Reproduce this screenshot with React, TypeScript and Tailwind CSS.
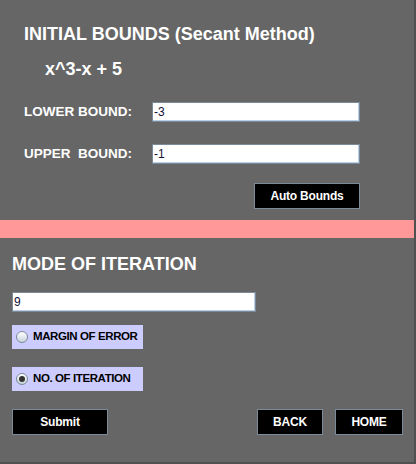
const font = { fontFamily: '"Liberation Sans", Arial, sans-serif' };

function Field({ value, width }: { value: string; width: string }) {
  return (
    <div
      className={`${width} h-[20px] bg-white border border-[#7a8a99] shadow-[inset_-1px_-1px_0_#b8cfe5] flex items-center pl-[1px] text-[12px] text-[#111133]`}
    >
      {value}
    </div>
  );
}

function Radio({ label, checked }: { label: string; checked?: boolean }) {
  return (
    <div className="w-[131px] h-[24px] bg-[#ccccff] flex items-center pl-[4px] gap-[5px]">
      <span className="w-[12px] h-[12px] shrink-0 rounded-full border border-[#7a8a99] bg-gradient-to-b from-white to-[#c8d2dc] flex items-center justify-center">
        {checked && <span className="w-[6px] h-[6px] rounded-full bg-[#333]" />}
      </span>
      <span className="text-[11.5px] font-bold text-black whitespace-nowrap tracking-[-0.4px]">{label}</span>
    </div>
  );
}

function Button({ label, width }: { label: string; width: string }) {
  return (
    <button
      className={`${width} h-[26px] bg-black border border-[#7a8a99] text-white text-[12px] font-bold tracking-[-0.2px] flex items-center justify-center`}
    >
      {label}
    </button>
  );
}

export default function App() {
  return (
    <div
      style={font}
      className="w-[416px] h-[464px] bg-[#666666] border-r-2 border-b-2 border-[#505050] flex flex-col text-white"
    >
      <div className="h-[220px] pl-6 pt-6">
        <h1 className="text-[18px] leading-[20px] font-bold">INITIAL BOUNDS (Secant Method)</h1>
        <div className="mt-[15px] pl-[21px] text-[18px] leading-[20px] font-bold">x^3-x + 5</div>
        <div className="mt-[23px] flex items-center">
          <span className="w-[128px] text-[13.5px] font-bold">LOWER BOUND:</span>
          <Field value="-3" width="w-[208px]" />
        </div>
        <div className="mt-[22px] flex items-center">
          <span className="w-[128px] text-[13.5px] font-bold whitespace-pre">UPPER  BOUND:</span>
          <Field value="-1" width="w-[208px]" />
        </div>
        <div className="mt-[18px] w-[336px] flex justify-end">
          <Button label="Auto Bounds" width="w-[106px]" />
        </div>
      </div>

      <div className="h-[18px] bg-[#ff9999]" />

      <div className="flex-1 pl-3 pt-4">
        <h2 className="text-[18px] leading-[20px] font-bold">MODE OF ITERATION</h2>
        <div className="mt-[18px]">
          <Field value="9" width="w-[244px]" />
        </div>
        <div className="mt-[13px]">
          <Radio label="MARGIN OF ERROR" />
        </div>
        <div className="mt-[18px]">
          <Radio label="NO. OF ITERATION" checked />
        </div>
        <div className="mt-[18px] w-[391px] flex items-center">
          <Button label="Submit" width="w-[96px]" />
          <div className="flex-1" />
          <Button label="BACK" width="w-[66px]" />
          <div className="w-[12px]" />
          <Button label="HOME" width="w-[68px]" />
        </div>
      </div>
    </div>
  );
}
